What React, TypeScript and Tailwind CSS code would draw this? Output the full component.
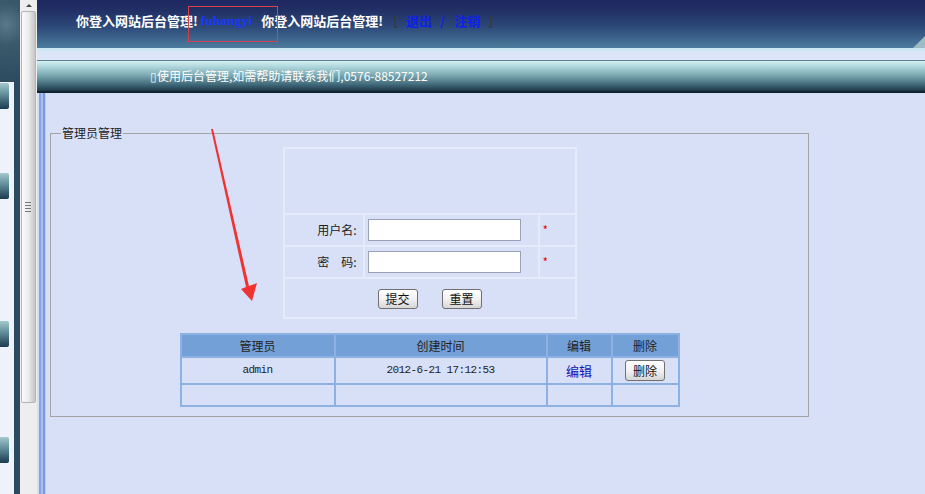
import React from 'react';

const cjk = "font-['Noto_Sans_CJK_SC','Noto_Sans',sans-serif]";
const mono = "font-['Liberation_Mono','DejaVu_Sans_Mono',monospace]";

const OldButton = ({ label, className = '' }: { label: string; className?: string }) => (
    <button
        className={`h-[20px] w-[40px] rounded-[3px] border border-[#707070] bg-linear-to-b from-white via-[#f2f2f2] to-[#d6d6d6] text-[12px] leading-none text-[#111] ${className}`}
    >
        {label}
    </button>
);

const SideTab = () => (
    <div className="h-[26px] w-[9px] rounded-r-[2px] bg-[linear-gradient(to_bottom,#a4c8cc_0%,#5f8c98_45%,#1c3a4e_100%)]" />
);

const LeftFrame = () => (
    <div className="flex w-[20px] flex-col">
        <div className="h-[82px] bg-[radial-gradient(circle_at_30%_30%,#5a7888_0%,#3a5a6c_35%,#2c4a5e_100%)]" />
        <div className="flex flex-1">
            <div className="flex w-[14px] flex-col bg-[#eef2fb] pt-[1px]">
                <SideTab />
                <div className="h-[64px]" />
                <SideTab />
                <div className="h-[122px]" />
                <SideTab />
                <div className="h-[90px]" />
                <SideTab />
            </div>
            <div className="w-[6px] bg-[#2b4a60]" />
        </div>
    </div>
);

const ScrollBar = () => (
    <div className="flex w-[17px] flex-col items-center bg-[#eeeeee]">
        <div className="flex h-[11px] w-full items-center justify-center">
            <div className="h-0 w-0 border-x-[3px] border-b-[3px] border-x-transparent border-b-[#444]" />
        </div>
        <div className="flex h-[392px] w-[15px] flex-col items-center justify-center rounded-[2px] border border-[#b4b4b4] bg-linear-to-r from-[#fafafa] via-[#ececec] to-[#c4c4c4]">
            <div className="flex flex-col gap-[2px] pr-[2px]">
                <div className="h-[1px] w-[6px] bg-[#777]" />
                <div className="h-[1px] w-[6px] bg-[#777]" />
                <div className="h-[1px] w-[6px] bg-[#777]" />
                <div className="h-[1px] w-[6px] bg-[#777]" />
            </div>
        </div>
    </div>
);

const Header = () => (
    <div className="relative h-[48px] bg-[linear-gradient(to_bottom,#1e2860_0%,#212f64_20%,#2c4878_55%,#4c7c9e_100%)]">
        <div className="flex items-center pl-[39px] pt-[12px] text-[13px] font-bold leading-[18px] text-white">
            <span>你登入网站后台管理!</span>
            <span className="ml-[3px] font-['Liberation_Serif',serif] text-[13px] font-bold tracking-[0.3px] text-[#1838ff]">fuhongyi</span>
            <span className="ml-[9px]">你登入网站后台管理!</span>
            <span className="ml-[10px] text-[#3a3a3a]">[</span>
            <span className="ml-[8px] font-bold text-[#0c20f0]">退出</span>
            <span className="ml-[8px] font-bold text-[#0c20f0]">/</span>
            <span className="ml-[9px] font-bold text-[#0c20f0]">注销</span>
            <span className="ml-[8px] text-[#3a3a3a]">]</span>
        </div>
        <div className="absolute left-[151px] top-[6px] h-[36px] w-[90px] border border-[#d8404c]" />
        <svg className="absolute right-0 top-[36px]" width="14" height="12" viewBox="0 0 14 12">
            <polygon points="14,0 14,12 2,12" fill="#9cbcc4" />
        </svg>
    </div>
);

const InfoBar = () => (
    <div className="flex flex-col">
        <div className="h-[3px] bg-[#cbe8f2]" />
        <div className="h-[9px] bg-[#dde6f8]" />
        <div className="h-[1px] bg-[#5c8290]" />
        <div className="flex h-[30px] items-center bg-[linear-gradient(to_bottom,#d2f0f2_0%,#a9d2d8_22%,#77a4ae_50%,#416a7a_78%,#1e3848_100%)] pl-[113px] text-[12px] text-white">
            <span className="text-[#e8f4f8]">▯</span>
            <span>使用后台管理,如需帮助请联系我们,0576-88527212</span>
        </div>
        <div className="h-[2px] bg-[#0e2230]" />
    </div>
);

const LoginForm = () => (
    <table className="border-separate border-spacing-[2px] bg-[#e5ebfa] text-[12px] text-[#222]">
        <tbody>
            <tr>
                <td colSpan={3} className="h-[64px] bg-[#d7e0f7]" />
            </tr>
            <tr>
                <td className="h-[30px] w-[78px] bg-[#d7e0f7] pr-[6px] text-right">用户名:</td>
                <td className="w-[173px] bg-[#d7e0f7] pl-[3px]">
                    <input className="h-[22px] w-[153px] border border-[#9aa3b6] bg-white outline-none" />
                </td>
                <td className="w-[35px] bg-[#d7e0f7] pl-[3px] text-[#e01010]">*</td>
            </tr>
            <tr>
                <td className="h-[30px] bg-[#d7e0f7] pr-[6px] text-right">密　码:</td>
                <td className="bg-[#d7e0f7] pl-[3px]">
                    <input type="password" className="h-[22px] w-[153px] border border-[#9aa3b6] bg-white outline-none" />
                </td>
                <td className="bg-[#d7e0f7] pl-[3px] text-[#e01010]">*</td>
            </tr>
            <tr>
                <td colSpan={3} className="h-[38px] bg-[#d7e0f7]">
                    <div className="flex justify-center gap-[24px] pt-[2px]">
                        <OldButton label="提交" />
                        <OldButton label="重置" />
                    </div>
                </td>
            </tr>
        </tbody>
    </table>
);

const AdminTable = () => (
    <table className="table-fixed w-[500px] border-separate border-spacing-[2px] bg-[#8db1e2] text-center text-[12px] text-[#222]">
        <thead>
            <tr>
                <th className="h-[21px] w-[152px] bg-[#72a0d7] font-normal">管理员</th>
                <th className="w-[210px] bg-[#72a0d7] font-normal">创建时间</th>
                <th className="w-[63px] bg-[#72a0d7] font-normal">编辑</th>
                <th className="w-[65px] bg-[#72a0d7] font-normal">删除</th>
            </tr>
        </thead>
        <tbody>
            <tr>
                <td className={`h-[25px] bg-[#d7e0f7] ${mono} text-[11px] tracking-[-0.6px]`}>admin</td>
                <td className={`bg-[#d7e0f7] ${mono} text-[11px] tracking-[-0.6px]`}>2012-6-21 17:12:53</td>
                <td className="bg-[#d7e0f7] text-[13px] text-[#1414b4]">编辑</td>
                <td className="bg-[#d7e0f7]">
                    <OldButton label="删除" className="h-[21px] w-[39px]" />
                </td>
            </tr>
            <tr>
                <td className="h-[20px] bg-[#d7e0f7]" />
                <td className="bg-[#d7e0f7]" />
                <td className="bg-[#d7e0f7]" />
                <td className="bg-[#d7e0f7]" />
            </tr>
        </tbody>
    </table>
);

const SideStripes = () => (
    <div className="flex w-[9px]">
        <div className="w-[2px] bg-[#d4def7]" />
        <div className="w-[2px] bg-[#86a4e6]" />
        <div className="w-[2px] bg-[#a9bff1]" />
        <div className="w-[2px] bg-[#7b98e2]" />
        <div className="w-[1px] bg-[#c4d0f3]" />
    </div>
);

export default function App() {
    return (
        <div className={`relative flex h-[494px] w-full overflow-hidden bg-[#d7e0f7] ${cjk}`}>
            <LeftFrame />
            <ScrollBar />
            <div className="flex flex-1 flex-col">
                <Header />
                <InfoBar />
                <div className="flex flex-1">
                    <SideStripes />
                    <div className="flex-1 pl-[4px] pt-[32px]">
                        <fieldset className="w-[759px] border border-[#a4a4a4]">
                            <legend className="ml-[10px] px-[1px] text-[12px] leading-[16px] text-[#222]">管理员管理</legend>
                            <div className="flex flex-col items-center pb-[9px] pt-[6px]">
                                <LoginForm />
                                <div className="h-[14px]" />
                                <AdminTable />
                            </div>
                        </fieldset>
                    </div>
                </div>
            </div>
            <svg className="pointer-events-none absolute left-0 top-0" width="925" height="494" viewBox="0 0 925 494">
                <polygon points="211,129 213,129 249,286 257,283 252,301 241,289 246,287" fill="#f03232" />
            </svg>
        </div>
    );
}
